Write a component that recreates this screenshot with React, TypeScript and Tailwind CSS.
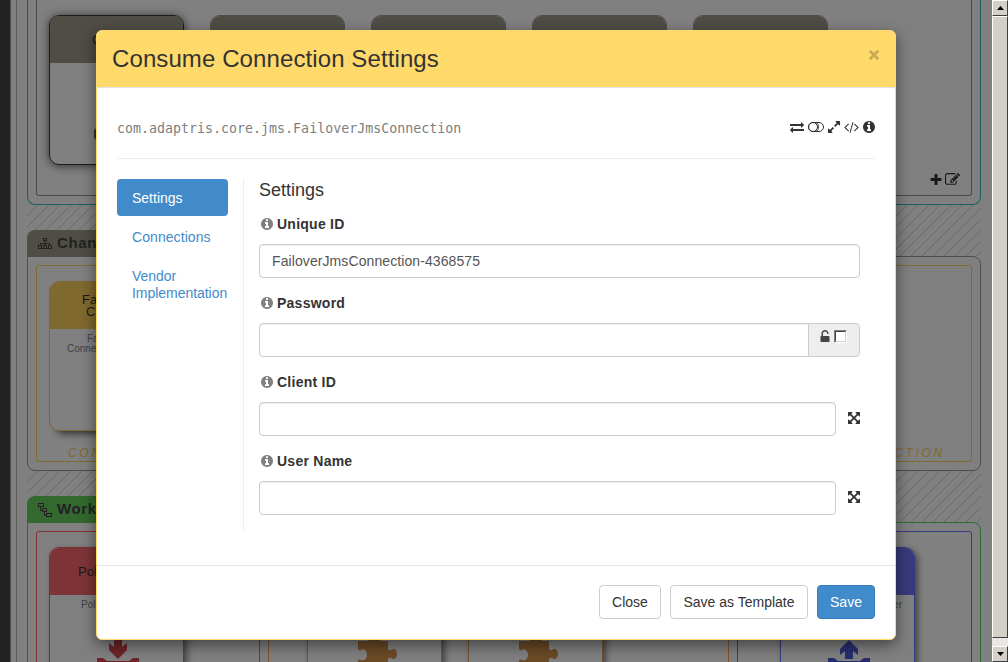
import type { ReactNode } from "react";

const PATHS = {
  exchange:
    "M1792 1184v192q0 13-9.5 22.5t-22.5 9.5h-1376v192q0 13-9.5 22.5t-22.5 9.5q-12 0-24-10l-319-320q-9-9-9-22 0-14 9-23l320-320q9-9 23-9 13 0 22.5 9.5t9.5 22.5v192h1376q13 0 22.5 9.5t9.5 22.5zm0-544q0 14-9 23l-320 320q-9 9-23 9-13 0-22.5-9.5t-9.5-22.5v-192h-1376q-13 0-22.5-9.5t-9.5-22.5v-192q0-13 9.5-22.5t22.5-9.5h1376v-192q0-14 9-23t23-9q12 0 24 10l319 319q9 9 9 23z",
  expand:
    "M883 1056q0 13-10 23l-332 332 144 144q19 19 19 45t-19 45-45 19h-448q-26 0-45-19t-19-45v-448q0-26 19-45t45-19 45 19l144 144 332-332q10-10 23-10t23 10l114 114q10 10 10 23zm781-864v448q0 26-19 45t-45 19-45-19l-144-144-332 332q-10 10-23 10t-23-10l-114-114q-10-10-10-23t10-23l332-332-144-144q-19-19-19-45t19-45 45-19h448q26 0 45 19t19 45z",
  code: "M617 1399l-50 50q-10 10-23 10t-23-10l-466-466q-10-10-10-23t10-23l466-466q10-10 23-10t23 10l50 50q10 10 10 23t-10 23l-393 393 393 393q10 10 10 23t-10 23zm591-1067l-373 1291q-4 13-15.5 19.5t-23.5 2.5l-62-17q-13-4-19.5-15.5t-2.5-24.5l373-1291q4-13 15.5-19.5t23.5-2.5l62 17q13 4 19.5 15.5t2.5 24.5zm657 651l-466 466q-10 10-23 10t-23-10l-50-50q-10-10-10-23t10-23l393-393-393-393q-10-10-10-23t10-23l50-50q10-10 23-10t23 10l466 466q10 10 10 23t-10 23z",
  info: "M1152 1376v-160q0-14-9-23t-23-9h-96v-512q0-14-9-23t-23-9h-320q-14 0-23 9t-9 23v160q0 14 9 23t23 9h96v320h-96q-14 0-23 9t-9 23v160q0 14 9 23t23 9h448q14 0 23-9t9-23zm-128-896v-160q0-14-9-23t-23-9h-192q-14 0-23 9t-9 23v160q0 14 9 23t23 9h192q14 0 23-9t9-23zm640 416q0 209-103 385.5t-279.5 279.5-385.5 103-385.5-103-279.5-279.5-103-385.5 103-385.5 279.5-279.5 385.5-103 385.5 103 279.5 279.5 103 385.5z",
  arrows:
    "M1411 541l-355 355 355 355 144-144q29-31 70-14 39 17 39 59v448q0 26-19 45t-45 19h-448q-42 0-59-40-17-39 14-69l144-144-355-355-355 355 144 144q31 30 14 69-17 40-59 40h-448q-26 0-45-19t-19-45v-448q0-42 40-59 39-17 69 14l144 144 355-355-355-355-144 144q-19 19-45 19-12 0-24-5-40-17-40-59v-448q0-26 19-45t45-19h448q42 0 59 40 17 39-14 69l-144 144 355 355 355-355-144-144q-31-30-14-69 17-40 59-40h448q26 0 45 19t19 45v448q0 42-39 59-13 5-25 5-26 0-45-19z",
  plus: "M1600 736v192q0 40-28 68t-68 28h-416v416q0 40-28 68t-68 28h-192q-40 0-68-28t-28-68v-416h-416q-40 0-68-28t-28-68v-192q0-40 28-68t68-28h416v-416q0-40 28-68t68-28h192q40 0 68 28t28 68v416h416q40 0 68 28t28 68z",
  edit: "M888 1184l116-116-152-152-116 116v56h96v96h56zm440-720q-16-16-33 1l-350 350q-17 17-1 33t33-1l350-350q17-17 1-33zm80 594v190q0 119-84.5 203.5t-203.5 84.5h-832q-119 0-203.5-84.5t-84.5-203.5v-832q0-119 84.5-203.5t203.5-84.5h832q63 0 117 25 15 7 18 23 3 17-9 29l-49 49q-14 14-32 8-23-6-45-6h-832q-66 0-113 47t-47 113v832q0 66 47 113t113 47h832q66 0 113-47t47-113v-126q0-13 9-22l64-64q15-15 35-7t20 29zm-96-738l288 288-672 672h-288v-288zm444 132l-92 92-288-288 92-92q28-28 68-28t68 28l152 152q28 28 28 68t-28 68z",
  unlock:
    "M1376 768q40 0 68 28t28 68v576q0 40-28 68t-68 28h-960q-40 0-68-28t-28-68v-576q0-40 28-68t68-28h32v-320q0-185 131.5-316.5t316.5-131.5 316.5 131.5 131.5 316.5q0 26-19 45t-45 19h-64q-26 0-45-19t-19-45q0-106-75-181t-181-75-181 75-75 181v320h736z",
};

function Icon({ name, className, box = "0 0 1792 1792" }: { name: keyof typeof PATHS; className: string; box?: string }) {
  return (
    <svg viewBox={box} className={`shrink-0 ${className}`} fill="currentColor">
      <path d={PATHS[name]} />
    </svg>
  );
}

function ToggleOff() {
  return (
    <svg viewBox="0 0 16 10" className="h-2.5 w-4 shrink-0" fill="none" stroke="currentColor">
      <rect x="0.5" y="0.5" width="15" height="9" rx="4.5" />
      <circle cx="5" cy="5" r="4.5" />
      <path d="M8 0.5c3.2 1.6 3.2 7.4 0 9" />
    </svg>
  );
}

function SitemapIcon() {
  return (
    <svg viewBox="0 0 14 11" className="h-[11px] w-3.5 shrink-0" fill="none" stroke="currentColor">
      <rect x="5.5" y="0.5" width="3" height="2" />
      <path d="M7 3v4M2.5 7V5.5h9V7" />
      <rect x="0.5" y="7.5" width="3" height="3" />
      <rect x="5.5" y="7.5" width="3" height="3" />
      <rect x="10.5" y="7.5" width="3" height="3" />
      <path d="M0 10.5h14" />
    </svg>
  );
}

function FlowIcon() {
  return (
    <svg viewBox="0 0 14 14" className="h-3.5 w-3.5 shrink-0" fill="none" stroke="currentColor">
      <rect x="0.5" y="0.5" width="5" height="3" />
      <path d="M2.5 4v3.500H4M6.5 9v3.500H8" />
      <rect x="4.500" y="5.500" width="4" height="3" />
      <rect x="8.500" y="10.500" width="5" height="3" />
    </svg>
  );
}

function Card({
  border,
  head,
  title,
  children,
  className = "",
}: {
  border: string;
  head: string;
  title?: ReactNode;
  children?: ReactNode;
  className?: string;
}) {
  return (
    <div className={`h-[150px] w-[135px] shrink-0 overflow-hidden rounded-[10px] border ${border} ${className}`}>
      <div className={`flex h-[47px] flex-col justify-center text-[13px] leading-3 text-[#1a1a1a] ${head}`}>{title}</div>
      {children}
    </div>
  );
}

function Hatch({ className }: { className: string }) {
  return (
    <svg className={`block w-full ${className}`}>
      <defs>
        <pattern id="hatch" width="11" height="11" patternUnits="userSpaceOnUse">
          <path d="M-1 12L12 -1M-6 6L6 -6M5 17L17 5" stroke="#686868" strokeWidth="0.9" />
        </pattern>
      </defs>
      <rect width="100%" height="100%" fill="url(#hatch)" />
    </svg>
  );
}

function PuzzleIcon() {
  return (
    <svg viewBox="0 0 40 36" className="ml-[50px] h-9 w-10" fill="#6b4a26">
      <path d="M0 3h10q2-1 1-3h11q-1 2 1 3h7v8q1 2 3 1c2-2 6-1 6 4s-4 6-6 4q-2-1-3 1v15H0V22q2-1 3 0c3 1 6-1 6-5s-3-7-6-5q-2 1-3-1z" />
    </svg>
  );
}

function Field({ label, children }: { label: string; children: ReactNode }) {
  return (
    <div className="h-[79px]">
      <div className="flex h-5 items-center pl-px text-sm font-bold tracking-[0.25px]">
        <Icon name="info" className="mr-[3px] size-3.5 text-[#808080]" />
        {label}
      </div>
      <div className="mt-2.5 flex">{children}</div>
    </div>
  );
}

const inputClass =
  "h-[34px] min-w-0 flex-1 border border-[#ccc] bg-white px-3 text-sm tracking-[0.09px] text-[#555] shadow-[inset_0_1px_1px_rgba(0,0,0,0.075)] outline-none";

function Canvas() {
  return (
    <div className="flex h-full min-w-0 flex-1 bg-[#808080]">
      <div className="w-2.5 shrink-0 bg-[#222]" />
      <div className="w-[7px] shrink-0 border-x border-l-[#4a535c] border-r-[#5c5c5c]" />
      <div className="ml-2.5 mr-[11px] flex min-w-0 flex-1 flex-col">
        <div className="h-[205px] shrink-0 rounded-b-lg border border-t-0 border-[#1b5f63] px-2 pb-2">
          <div className="relative flex h-[196px] gap-[26px] rounded-b-[3px] border border-t-0 border-[#4c4a46] pl-3 pt-[15px]">
            <Card
              border="border-[#1c1c1c]"
              head="bg-[#4f4d45]"
              className="shadow-[0_1px_10px_#2c3230]"
              title={<span className="pl-[42px]">C</span>}
            >
              <div className="ml-11 mt-[65px] h-3 w-10 rounded-sm bg-[#333]" />
            </Card>
            <Card border="border-[#4f4d45]" head="bg-[#4f4d45]" />
            <Card border="border-[#4f4d45]" head="bg-[#4f4d45]" />
            <Card border="border-[#4f4d45]" head="bg-[#4f4d45]" />
            <Card border="border-[#4f4d45]" head="bg-[#4f4d45]" />
            <div className="absolute bottom-2 right-[11px] flex items-center gap-0.5 text-[#1a1a1a]">
              <Icon name="plus" className="size-3.5" />
              <Icon name="edit" className="size-[15px]" />
            </div>
          </div>
        </div>

        <div className="relative h-[51px] shrink-0">
          <Hatch className="h-full" />
          <div className="absolute left-0 top-[25px] flex h-[27px] w-[200px] items-center gap-[5px] rounded-t-lg bg-[#4f4d45] pl-[11px] text-[15px] font-bold tracking-[0.6px] text-[#222]">
            <SitemapIcon />
            Chan
          </div>
        </div>
        <div className="h-[215px] shrink-0 rounded-b-lg rounded-tr-lg border border-[#4f4d45] p-2">
          <div className="flex h-full flex-col rounded-[3px] border border-[#80692f] pl-3 pt-[15px]">
            <Card
              border="border-[#80692f]"
              head="bg-[#80692f]"
              className="shadow-[5px_5px_7px_-2px_#333]"
              title={
                <>
                  <span className="pl-8">Fa</span>
                  <span className="pl-9">C</span>
                </>
              }
            >
              <div className="flex flex-col pt-[5px] text-[10px] leading-[10px] text-[#404040]">
                <span className="pl-[37px]">Fa</span>
                <span className="pl-[17px]">Conne</span>
              </div>
            </Card>
            <div className="flex justify-between pl-[19px] pr-[26px] pt-[15px] text-xs italic leading-[14px] tracking-[2.7px] text-[#80692f]">
              <span>CON</span>
              <span>CTION</span>
            </div>
          </div>
        </div>

        <div className="relative h-[51px] shrink-0">
          <Hatch className="h-full" />
          <div className="absolute left-0 top-[25px] flex h-[27px] w-[200px] items-center gap-[5px] rounded-t-lg bg-[#33692f] pl-[11px] text-[15px] font-bold tracking-[0.6px] text-[#222]">
            <FlowIcon />
            Work
          </div>
        </div>
        <div className="h-[215px] shrink-0 rounded-tr-lg border border-[#2f6b33] p-2">
          <div className="flex h-full gap-2">
            <div className="w-56 rounded-[3px] border border-[#863034] pl-3 pt-[15px]">
              <Card
                border="border-[#7e3033]"
                head="bg-[#7e3436]"
                className="shadow-[3px_3px_6px_#444]"
                title={<span className="pl-7">Pol</span>}
              >
                <div className="pl-[31px] pt-1 text-[10px] leading-3 text-[#404040]">Pol</div>
                <svg viewBox="0 0 42 42" className="ml-[47px] mt-[29px] h-[42px] w-[42px]" fill="#6f2528">
                  <path d="M17 0h8v7l5-4v7l-9 9-9-9V3l5 4zM0 18h6l4 3h22l4-3h6v6H0z" />
                </svg>
              </Card>
            </div>
            <div className="flex w-[461px] gap-[26px] rounded-[3px] border border-[#81502a] pl-[38px] pt-[15px]">
              {[0, 1].map((n) => (
                <Card key={n} border="border-[#735333]" head="bg-[#735333]" className="shadow-[3px_3px_6px_#444]">
                  <div className="pt-[43px]">
                    <PuzzleIcon />
                  </div>
                </Card>
              ))}
            </div>
            <div className="min-w-0 flex-1 rounded-[3px] border border-[#373b82] pl-[42px] pt-[15px]">
              <Card border="border-[#373b82]" head="bg-[#373a7d]" className="shadow-[3px_3px_6px_#444]">
                <div className="pr-3 pt-1 text-right text-[10px] leading-3 text-[#404040]">er</div>
                <svg viewBox="0 0 42 42" className="ml-[47px] mt-[29px] h-[42px] w-[42px]" fill="#272e70">
                  <path d="M21 0l9 9v6l-5-4v8h-8v-8l-5 4V9zM0 18h6l4 3h22l4-3h6v6H0z" />
                </svg>
              </Card>
            </div>
          </div>
        </div>
      </div>
    </div>
  );
}

function Scrollbar() {
  const raised = "border border-b-[#404040] border-l-white border-r-[#404040] border-t-white bg-[#d4d0c8]";
  return (
    <div className="flex h-full w-4 shrink-0 flex-col bg-[#e9e7e3]">
      <div className={`flex h-4 items-center justify-center ${raised}`}>
        <svg viewBox="0 0 7 4" className="h-1 w-[7px]">
          <path d="M0 4L3.500 0L7 4z" />
        </svg>
      </div>
      <div className={`h-[622px] ${raised}`} />
      <div className="h-2 bg-[#e9e7e3]" />
      <div className={`flex h-4 items-center justify-center ${raised}`}>
        <svg viewBox="0 0 7 4" className="h-1 w-[7px]">
          <path d="M0 0h7L3.500 4z" />
        </svg>
      </div>
    </div>
  );
}

function Dialog() {
  return (
    <div className="absolute left-24 top-[30px] flex h-[610px] w-[800px] flex-col overflow-hidden rounded-md border border-[#ffda6b] bg-white text-[#333] shadow-[0_5px_15px_rgba(0,0,0,0.5)]">
      <div className="flex h-[57px] shrink-0 items-center justify-between border-b border-[#e5e5e5] bg-[#ffda6b] pl-[15px] pr-4">
        <h4 className="text-2xl tracking-[0.1px]">Consume Connection Settings</h4>
        <svg viewBox="0 0 10 10" className="mb-[9px] size-2.5" stroke="#c9ab55" strokeWidth="2.8">
          <path d="M0.8 0.8l8.400 8.400M9.200 0.800l-8.400 8.400" />
        </svg>
      </div>

      <div className="mx-5 flex h-[71px] shrink-0 justify-between border-b border-[#eee]">
        <span className="pt-[31px] font-['DejaVu_Sans_Mono',monospace] text-[13.3px] leading-5 text-[#808080]">
          com.adaptris.core.jms.FailoverJmsConnection
        </span>
        <div className="-mr-px mt-[29px] flex h-5 items-center gap-[3px]">
          <Icon name="exchange" className="mr-px size-3.5" />
          <ToggleOff />
          <Icon name="expand" className="size-3.5" />
          <Icon name="code" box="0 0 1920 1792" className="h-3.5 w-[15px]" />
          <Icon name="info" className="size-3.5" />
        </div>
      </div>

      <div className="mt-5 flex h-[351px] shrink-0 px-5">
        <nav className="flex w-[111px] shrink-0 flex-col gap-0.5 text-sm leading-[17px] text-[#428bca]">
          <a className="flex h-[37px] items-center rounded bg-[#428bca] pl-[15px] pt-0.5 text-white">Settings</a>
          <a className="flex h-[37px] items-center pl-[15px] pt-0.5 tracking-[0.07px]">Connections</a>
          <a className="pl-[15px] pt-[11px] tracking-[-0.04px]">Vendor Implementation</a>
        </nav>
        <div className="ml-[15px] flex-1 border-l border-[#eee] px-[15px]">
          <h4 className="mb-[13px] text-lg leading-[22px]">Settings</h4>
          <Field label="Unique ID">
            <input className={`${inputClass} rounded`} defaultValue="FailoverJmsConnection-4368575" />
          </Field>
          <Field label="Password">
            <input className={`${inputClass} rounded-l`} />
            <div className="-ml-px flex h-[34px] w-[52px] items-start rounded-r border border-[#ccc] bg-[#eee] pl-[9px] pt-1.5 text-[#444]">
              <Icon name="unlock" className="size-3.5" />
              <span className="ml-0.5 size-[13px] border border-b-white border-l-[#808080] border-r-white border-t-[#808080]">
                <span className="block size-full border border-b-[#d4d0c8] border-l-[#404040] border-r-[#d4d0c8] border-t-[#404040] bg-white" />
              </span>
            </div>
          </Field>
          <Field label="Client ID">
            <input className={`${inputClass} rounded`} />
            <Icon name="arrows" className="-mr-px ml-[11px] mt-[9px] size-3.5" />
          </Field>
          <Field label="User Name">
            <input className={`${inputClass} rounded`} />
            <Icon name="arrows" className="-mr-px ml-[11px] mt-[9px] size-3.5" />
          </Field>
        </div>
      </div>

      <div className="mt-[35px] flex flex-1 items-start justify-end gap-[9px] border-t border-[#e5e5e5] pr-5 pt-[19px] text-sm">
        <button className="h-[34px] w-[62px] rounded border border-[#ccc]">Close</button>
        <button className="h-[34px] w-[138px] rounded border border-[#ccc]">Save as Template</button>
        <button className="h-[34px] w-[58px] rounded border border-[#357ebd] bg-[#428bca] text-white">Save</button>
      </div>
    </div>
  );
}

export default function App() {
  return (
    <div className="relative flex h-[662px] w-[1008px] overflow-hidden font-['Liberation_Sans',Arial,sans-serif]">
      <Canvas />
      <Scrollbar />
      <Dialog />
    </div>
  );
}
